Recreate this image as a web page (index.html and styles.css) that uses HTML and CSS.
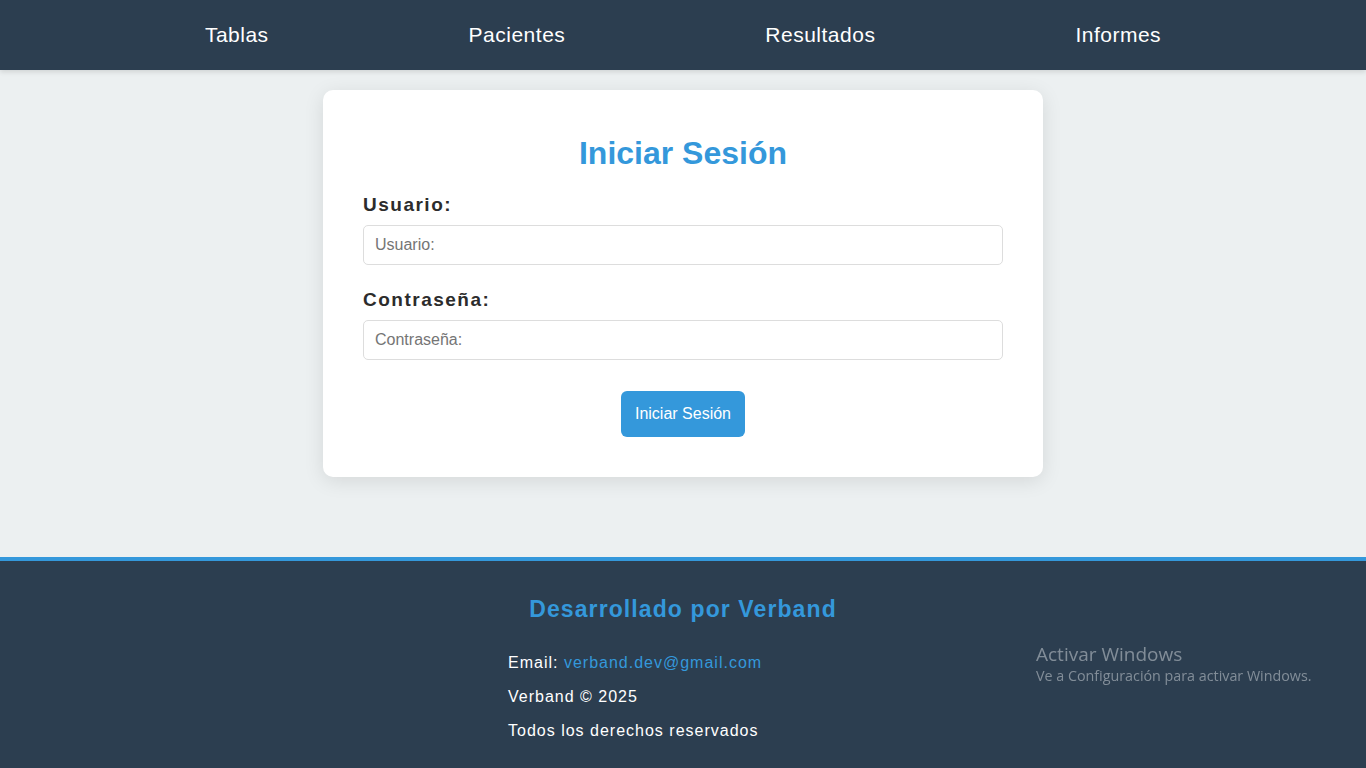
FILE: index.html
```html
<!DOCTYPE html>
<html lang="es">
<head>
<meta charset="utf-8">
<title>Iniciar Sesión</title>
<link rel="stylesheet" href="styles.css">
</head>
<body>
<nav class="topnav">
  <a href="#" class="nav-link">Tablas</a>
  <a href="#" class="nav-link">Pacientes</a>
  <a href="#" class="nav-link">Resultados</a>
  <a href="#" class="nav-link">Informes</a>
</nav>
<main class="main">
  <section class="card">
    <h2 class="card-title">Iniciar Sesión</h2>
    <form class="login-form">
      <div class="form-group">
        <label class="form-label" for="usuario">Usuario:</label>
        <input class="form-input" id="usuario" type="text" placeholder="Usuario:">
      </div>
      <div class="form-group">
        <label class="form-label" for="clave">Contraseña:</label>
        <input class="form-input" id="clave" type="password" placeholder="Contraseña:">
      </div>
      <div class="form-actions">
        <button class="btn" type="button">Iniciar Sesión</button>
      </div>
    </form>
  </section>
</main>
<footer class="footer">
  <h3 class="footer-title">Desarrollado por Verband</h3>
  <div class="footer-info">
    <p class="footer-text">Email: <a class="footer-link" href="#">verband.dev@gmail.com</a></p>
    <p class="footer-text">Verband © 2025</p>
    <p class="footer-text">Todos los derechos reservados</p>
  </div>
</footer>
<div class="watermark">
  <div class="wm-title">Activar Windows</div>
  <div class="wm-sub">Ve a Configuración para activar Windows.</div>
</div>
</body>
</html>
```
FILE: styles.css
```css
* { box-sizing: border-box; }
html, body {
  margin: 0;
  padding: 0;
}
body {
  font-family: "Liberation Sans", Arial, sans-serif;
  background: #ecf0f1;
  color: #2c2c2c;
  min-height: 768px;
}
.topnav {
  height: 70px;
  background: #2c3e50;
  display: flex;
  align-items: center;
  justify-content: center;
  gap: 200px;
  box-shadow: 0 2px 5px rgba(0,0,0,0.12);
  position: relative;
  z-index: 2;
}
.nav-link {
  color: #ffffff;
  text-decoration: none;
  font-size: 21px;
  letter-spacing: 0.5px;
}
.main {
  padding: 20px 0 80px;
  display: flex;
  justify-content: center;
}
.card {
  width: 720px;
  background: #ffffff;
  border-radius: 10px;
  padding: 40px;
  box-shadow: 0 4px 20px rgba(0,0,0,0.1);
}
.card-title {
  margin: 5px 0 22px;
  text-align: center;
  color: #3498db;
  font-size: 32px;
  font-weight: bold;
  line-height: 37px;
}
.login-form {
  display: flex;
  flex-direction: column;
}
.form-group {
  display: flex;
  flex-direction: column;
  margin-bottom: 24px;
}
.form-label {
  font-size: 19px;
  font-weight: bold;
  letter-spacing: 1.5px;
  color: #2c2c2c;
  line-height: 22px;
  margin-bottom: 9px;
}
.form-input {
  height: 40px;
  border: 1px solid #dddddd;
  border-radius: 5px;
  padding: 0 11px;
  font-family: "Liberation Sans", Arial, sans-serif;
  font-size: 16px;
  color: #333;
  background: #fff;
}
.form-input::placeholder {
  color: #757575;
}
.form-actions {
  display: flex;
  justify-content: center;
  margin-top: 7px;
}
.btn {
  height: 46px;
  padding: 0 14px;
  background: #3498db;
  color: #ffffff;
  border: none;
  border-radius: 6px;
  font-family: "Liberation Sans", Arial, sans-serif;
  font-size: 16px;
}
.footer {
  background: #2c3e50;
  border-top: 4px solid #3498db;
  padding: 35px 0 12px;
  min-height: 211px;
}
.footer-title {
  margin: 0 0 32px;
  text-align: center;
  color: #3498db;
  font-size: 23px;
  font-weight: bold;
  letter-spacing: 1.1px;
  line-height: 26px;
}
.footer-info {
  width: 350px;
  margin: 0 auto;
}
.footer-text {
  margin: 16px 0;
  color: #ffffff;
  font-size: 16px;
  letter-spacing: 1px;
  line-height: 18px;
}
.footer-info .footer-text:first-child { margin-top: 0; }
.footer-link {
  color: #3498db;
  text-decoration: none;
}
.watermark {
  position: fixed;
  left: 1036px;
  top: 642px;
  color: rgba(200, 205, 212, 0.55);
  font-family: "Open Sans", "Noto Sans", sans-serif;
  pointer-events: none;
}
.wm-title {
  font-size: 19px;
  line-height: 24px;
}
.wm-sub {
  font-size: 14.3px;
  line-height: 20px;
}
```
